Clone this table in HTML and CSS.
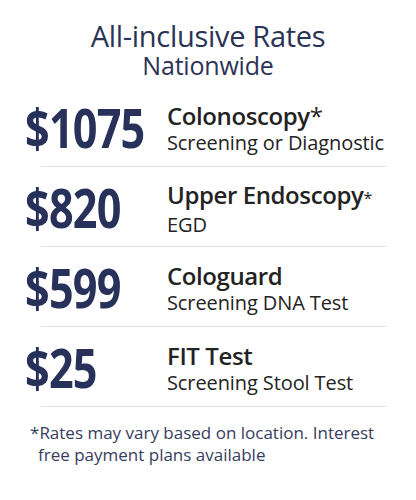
FILE: index.html
```html
<!DOCTYPE html>
<html>
<head>
<meta charset="utf-8">
<link rel="stylesheet" href="styles.css">
</head>
<body>
<div class="card">
  <header class="title">
    <div class="title-main">All-inclusive Rates</div>
    <div class="title-sub">Nationwide</div>
  </header>
  <div class="rows">
    <div class="row">
      <div class="price"><span>$1075</span></div>
      <div class="info">
        <div class="name">Colonoscopy<span class="ast">*</span></div>
        <div class="desc">Screening or Diagnostic</div>
      </div>
    </div>
    <div class="divider"></div>
    <div class="row">
      <div class="price"><span>$820</span></div>
      <div class="info">
        <div class="name">Upper Endoscopy<span class="ast small">*</span></div>
        <div class="desc">EGD</div>
      </div>
    </div>
    <div class="divider"></div>
    <div class="row">
      <div class="price"><span>$599</span></div>
      <div class="info">
        <div class="name">Cologuard</div>
        <div class="desc">Screening DNA Test</div>
      </div>
    </div>
    <div class="divider"></div>
    <div class="row">
      <div class="price"><span>$25</span></div>
      <div class="info">
        <div class="name">FIT Test</div>
        <div class="desc">Screening Stool Test</div>
      </div>
    </div>
    <div class="divider"></div>
  </div>
  <p class="note"><span class="note-ast">*</span>Rates may vary based on location. Interest free payment plans available</p>
</div>
</body>
</html>
```
FILE: styles.css
```css
html, body {
  margin: 0;
  padding: 0;
  background: #ffffff;
}
body {
  font-family: "Open Sans", "DejaVu Sans", sans-serif;
  width: 416px;
  height: 500px;
  overflow: hidden;
}
.card {
  padding-top: 19px;
}
.title {
  text-align: center;
  color: #2b3356;
}
.title-main {
  font-size: 29px;
  line-height: 33px;
  letter-spacing: -0.3px;
}
.title-sub {
  font-size: 25px;
  line-height: 26px;
  letter-spacing: -0.2px;
}
.rows {
  margin-top: 9px;
}
.row {
  display: flex;
  align-items: center;
  height: 79px;
  padding-left: 25px;
}
.price {
  width: 142px;
  flex: none;
}
.price span {
  display: inline-block;
  font-weight: 700;
  font-size: 54px;
  line-height: 60px;
  color: #27315a;
  transform: scaleX(0.8);
  transform-origin: left center;
  letter-spacing: -1px;
}
.info {
  color: #232323;
  margin-top: 6px;
}
.name {
  font-weight: 600;
  font-size: 24px;
  line-height: 24px;
  letter-spacing: -0.4px;
}
.ast {
  font-weight: 400;
}
.ast.small {
  font-size: 16px;
}
.desc {
  font-size: 20px;
  line-height: 24px;
  letter-spacing: -0.1px;
  margin-top: 3px;
}
.divider {
  height: 1px;
  background: #e2e2ea;
  margin: 0 29px 0 41px;
}
.note {
  margin: 15px 30px 0 38px;
  text-indent: -8px;
  font-size: 17px;
  line-height: 22px;
  color: #373d5e;
  letter-spacing: 0;
}
```
